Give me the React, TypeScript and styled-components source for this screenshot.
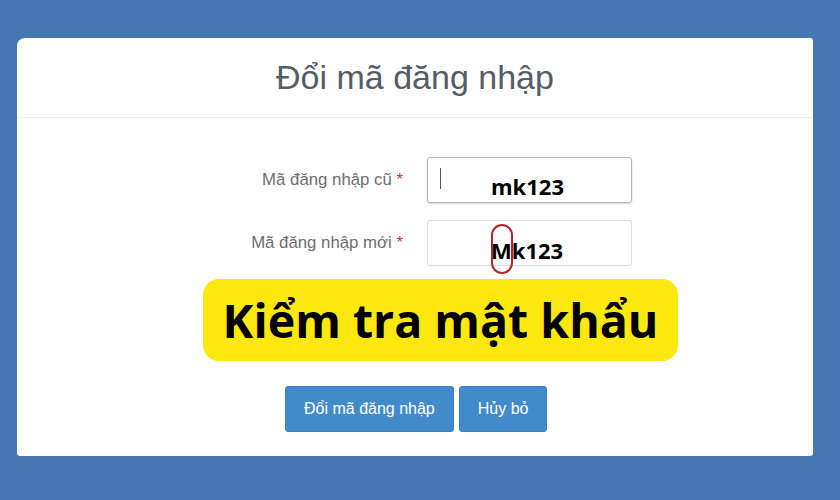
import * as React from 'react'
import styled, { createGlobalStyle } from 'styled-components'

const GlobalStyle = createGlobalStyle`
  html, body {
    margin: 0;
    padding: 0;
  }
  body {
    font-family: 'Liberation Sans', Arial, sans-serif;
  }
`

const Page = styled.div`
  box-sizing: border-box;
  width: 840px;
  height: 500px;
  padding: 38px 27px 44px 17px;
  background: #4677b0;
`

const Card = styled.div`
  height: 100%;
  background: #fff;
  border-radius: 8px 3px 3px 3px;
  display: flex;
  flex-direction: column;
`

const Header = styled.div`
  height: 79px;
  border-bottom: 1px solid #ececec;
  display: flex;
  align-items: center;
  justify-content: center;

  h2 {
    margin: 0;
    font-weight: normal;
    font-size: 34px;
    color: #555d66;
  }
`

const Form = styled.div`
  display: grid;
  grid-template-columns: 386px 205px;
  column-gap: 24px;
  row-gap: 17px;
  margin-top: 39px;
`

const Label = styled.label`
  align-self: center;
  text-align: right;
  font-size: 16.8px;
  color: #6e6e6e;

  span {
    color: #d0333a;
  }
`

const FieldBox = styled.div`
  position: relative;
  height: 46px;
`

const Input = styled.input<{ $focused?: boolean }>`
  box-sizing: border-box;
  width: 100%;
  height: 100%;
  border: 1px solid ${(p) => (p.$focused ? '#b5b5b5' : '#dcdcdc')};
  border-radius: 3px;
  background: #fff;
  box-shadow: ${(p) => (p.$focused ? '0 1px 2px rgba(0, 0, 0, 0.18)' : 'none')};
  outline: none;
`

const Caret = styled.span`
  position: absolute;
  left: 13px;
  top: 11px;
  width: 1px;
  height: 21px;
  background: #555;
`

const Typed = styled.span<{ $top: number }>`
  position: absolute;
  left: 64px;
  top: ${(p) => p.$top}px;
  transform: translateY(-50%);
  font-family: 'Open Sans', sans-serif;
  font-weight: 700;
  font-size: 22px;
  color: #000;
  pointer-events: none;
`

const Mark = styled.span`
  position: absolute;
  left: 64px;
  top: 4px;
  width: 18px;
  height: 46px;
  border: 2px solid #b3262c;
  border-radius: 11px;
`

const Badge = styled.div`
  width: 475px;
  height: 82px;
  margin: 13px 0 0 186px;
  border-radius: 16px;
  background: #fce80f;
  display: flex;
  align-items: center;
  justify-content: center;
  font-family: 'Open Sans', sans-serif;
  font-weight: 700;
  font-size: 46.5px;
  color: #000;
`

const Actions = styled.div`
  display: flex;
  gap: 5px;
  margin: 25px 0 0 268px;
`

const Button = styled.button`
  height: 46px;
  padding: 0 18px;
  border: 1px solid #3a7fc0;
  border-radius: 3px;
  background: #428bca;
  color: #fff;
  font-family: 'Liberation Sans', Arial, sans-serif;
  font-size: 16px;
  cursor: pointer;
`

const App = () => (
  <Page>
    <GlobalStyle />
    <Card>
      <Header>
        <h2>Đổi mã đăng nhập</h2>
      </Header>
      <Form>
        <Label>
          Mã đăng nhập cũ <span>*</span>
        </Label>
        <FieldBox>
          <Input type="text" readOnly $focused />
          <Caret />
          <Typed $top={29}>mk123</Typed>
        </FieldBox>
        <Label>
          Mã đăng nhập mới <span>*</span>
        </Label>
        <FieldBox>
          <Input type="text" readOnly />
          <Typed $top={30}>Mk123</Typed>
          <Mark />
        </FieldBox>
      </Form>
      <Badge>Kiểm tra mật khẩu</Badge>
      <Actions>
        <Button>Đổi mã đăng nhập</Button>
        <Button>Hủy bỏ</Button>
      </Actions>
    </Card>
  </Page>
)

export default App
